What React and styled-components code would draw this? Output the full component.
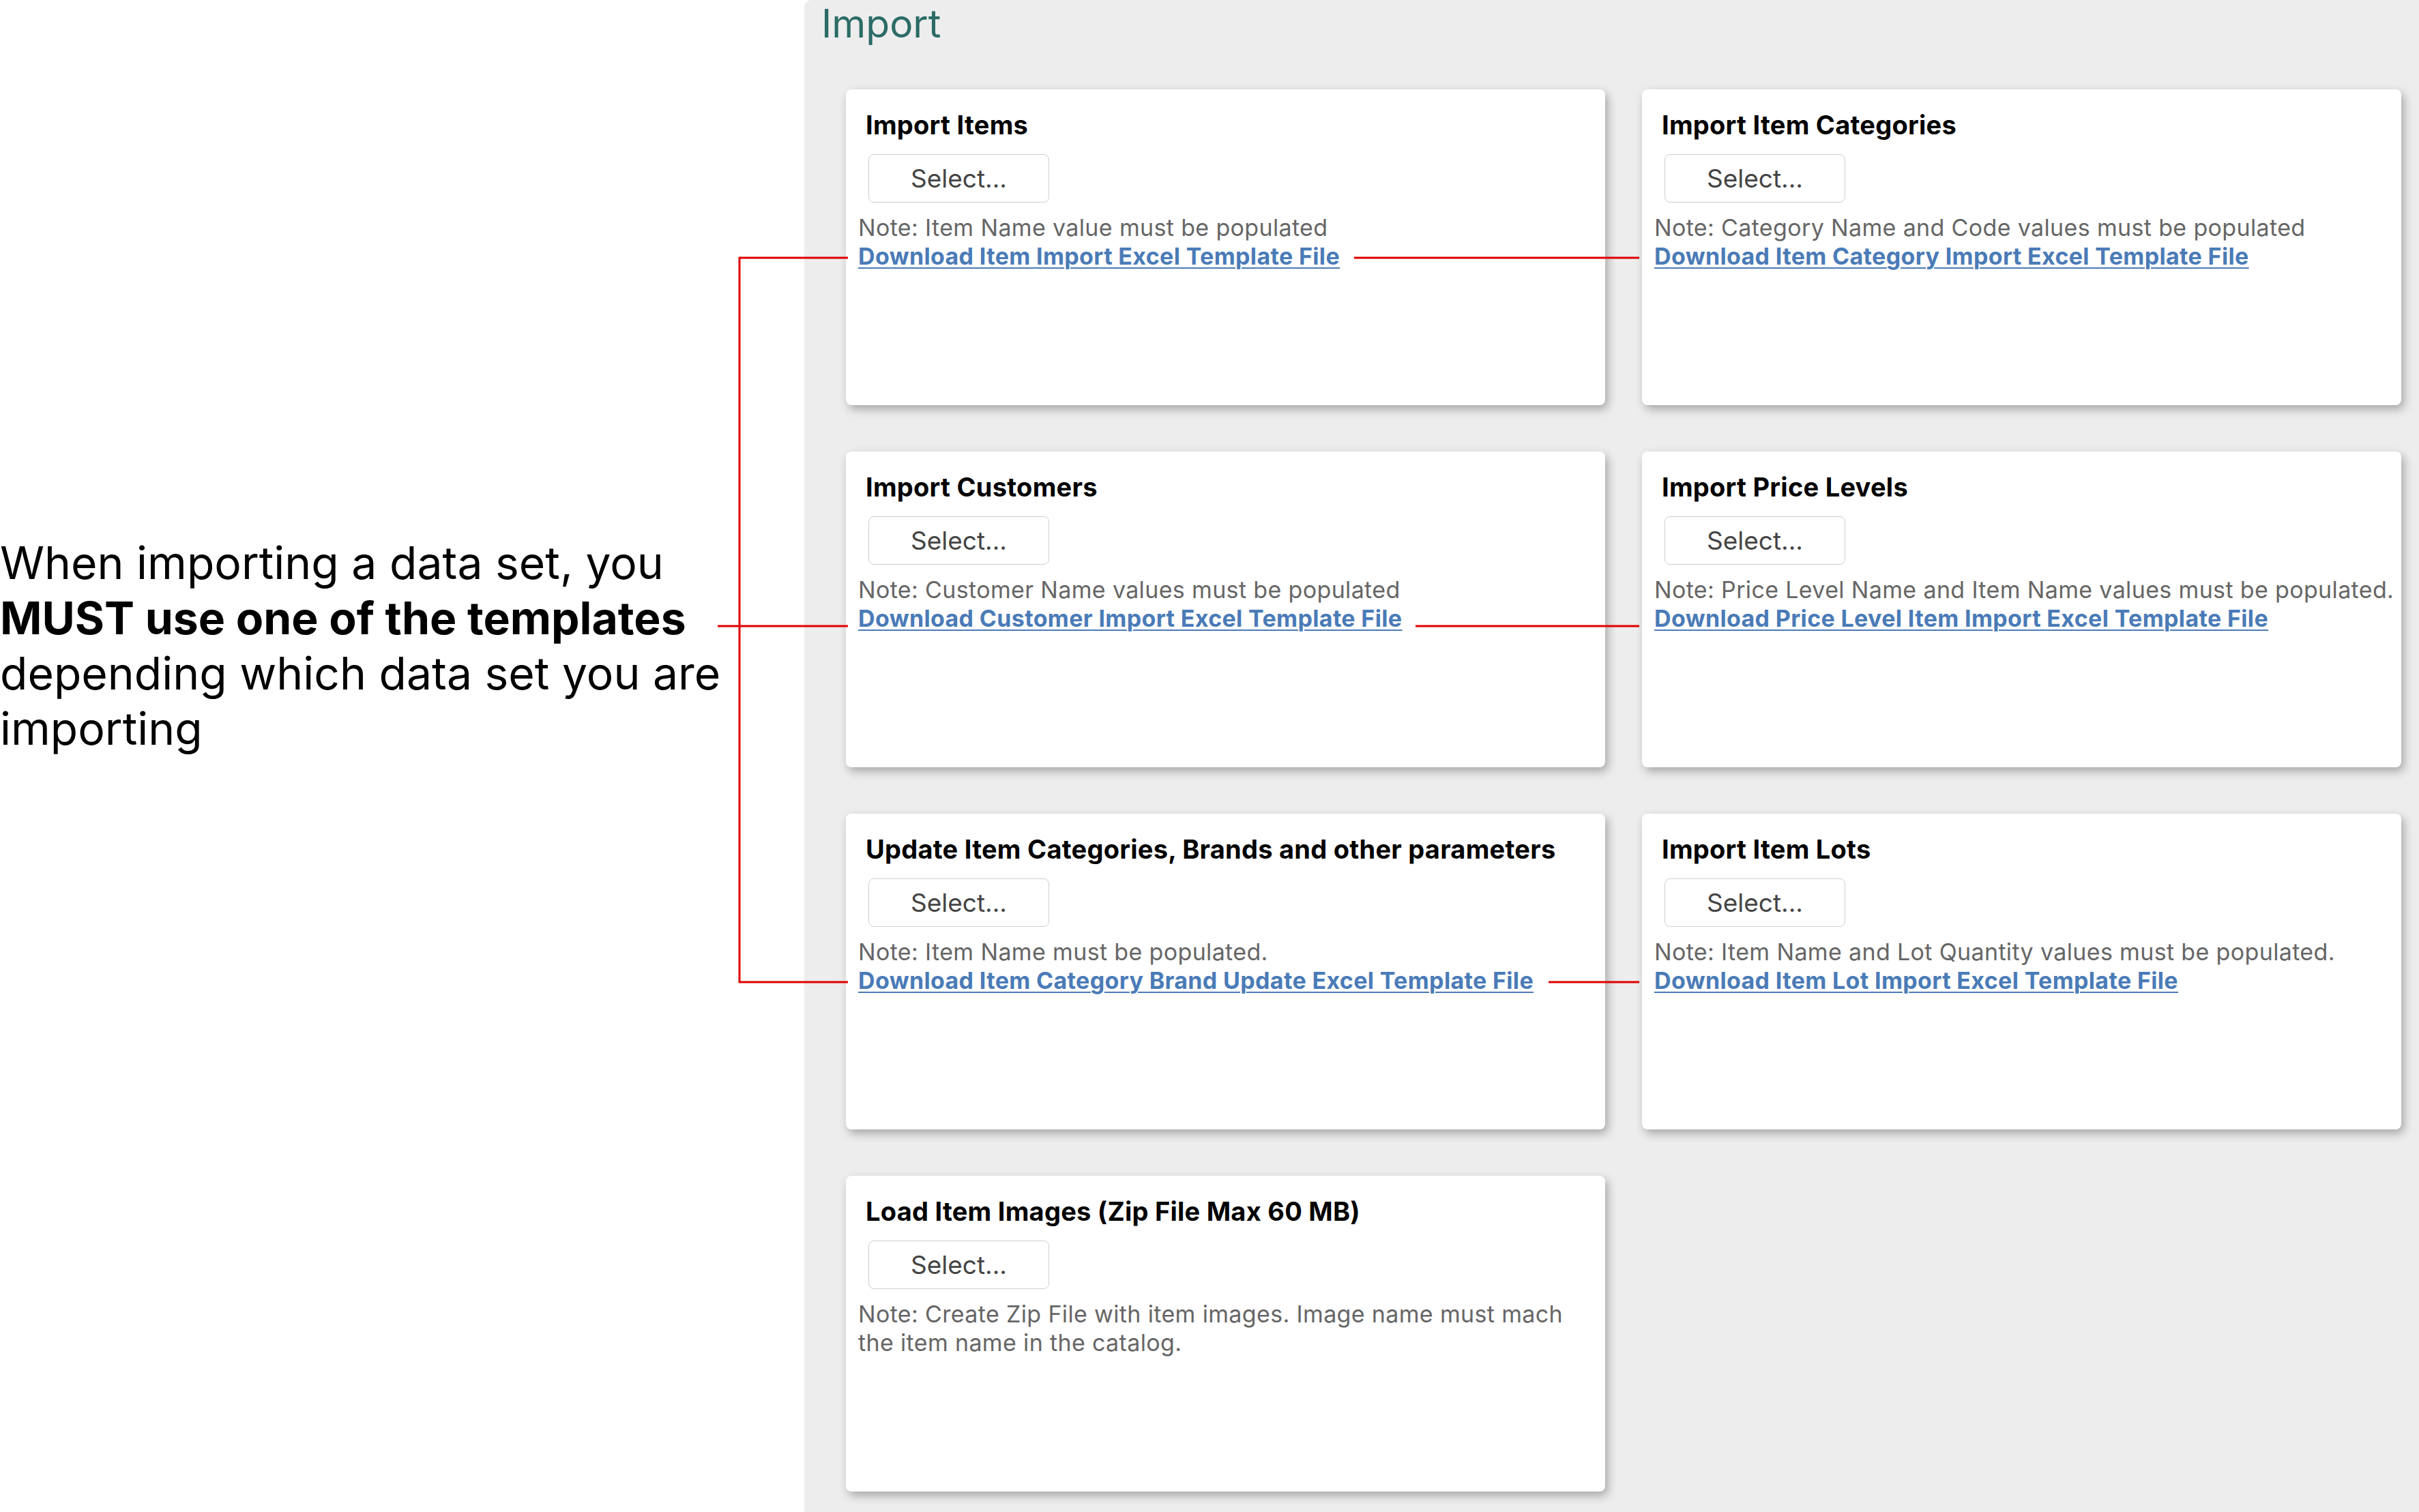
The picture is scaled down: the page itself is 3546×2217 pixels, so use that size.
import React from 'react';
import styled, { createGlobalStyle } from 'styled-components';

const GlobalStyle = createGlobalStyle`
  html, body {
    margin: 0;
    padding: 0;
    background: #fff;
  }
  body {
    font-family: Inter, "Liberation Sans", sans-serif;
  }
`;

const Page = styled.div`
  position: relative;
  display: flex;
  width: 3546px;
  height: 2217px;
  overflow: hidden;
`;

const Aside = styled.div`
  width: 1179px;
  flex-shrink: 0;
  padding-top: 785px;
  box-sizing: border-box;
`;

const Callout = styled.p`
  margin: 0;
  max-width: 1110px;
  font-size: 66px;
  line-height: 81px;
  color: #000;

  strong {
    font-weight: 700;
  }
`;

const Panel = styled.section`
  flex: 1;
  background: #ededed;
  border-top-left-radius: 10px;
  padding: 0 26px 0 25px;
`;

const Heading = styled.h1`
  margin: 0;
  font-size: 57px;
  font-weight: 400;
  line-height: 69px;
  color: #2b6b66;
`;

const Grid = styled.div`
  display: grid;
  grid-template-columns: repeat(2, 1fr);
  grid-auto-rows: 463px;
  column-gap: 54px;
  row-gap: 68px;
  margin-top: 62px;
  padding-left: 36px;
`;

const Card = styled.div`
  background: #fff;
  border-radius: 8px;
  box-shadow: 4px 6px 14px rgba(0, 0, 0, 0.3);
  padding: 30px 8px 0 18px;
  display: flex;
  flex-direction: column;
  align-items: flex-start;
`;

const CardTitle = styled.h2`
  margin: 0 0 20px 11px;
  font-size: 38px;
  font-weight: 700;
  letter-spacing: 0.25px;
  line-height: 45px;
  color: #000;
`;

const SelectButton = styled.button`
  width: 265px;
  height: 71px;
  margin: 0 0 16px 15px;
  border: 1px solid #cfcfcf;
  border-radius: 8px;
  background: #fff;
  font-family: inherit;
  font-size: 37px;
  color: #444;
  cursor: pointer;
`;

const Note = styled.p`
  margin: 0;
  white-space: pre;
  font-size: 34px;
  letter-spacing: 0.35px;
  line-height: 42px;
  color: #666;
`;

const TemplateLink = styled.a`
  display: block;
  font-size: 34px;
  letter-spacing: 0.35px;
  line-height: 42px;
  font-weight: 700;
  color: #4a7bb7;
  text-decoration: underline;
  text-decoration-thickness: 2px;
  text-underline-offset: 4px;
`;

const Overlay = styled.svg`
  position: absolute;
  top: 0;
  left: 0;
  pointer-events: none;
`;

const imports = [
  {
    title: 'Import Items',
    note: 'Note: Item Name value must be populated',
    link: 'Download Item Import Excel Template File',
  },
  {
    title: 'Import Item Categories',
    note: 'Note: Category Name and Code values must be populated',
    link: 'Download Item Category Import Excel Template File',
  },
  {
    title: 'Import Customers',
    note: 'Note: Customer Name values must be populated',
    link: 'Download Customer Import Excel Template File',
  },
  {
    title: 'Import Price Levels',
    note: 'Note: Price Level Name and Item Name values must be populated.',
    link: 'Download Price Level Item Import Excel Template File',
  },
  {
    title: 'Update Item Categories, Brands and other parameters',
    note: 'Note: Item Name must be populated.',
    link: 'Download Item Category Brand Update Excel Template File',
  },
  {
    title: 'Import Item Lots',
    note: 'Note: Item Name and Lot Quantity values must be populated.',
    link: 'Download Item Lot Import Excel Template File',
  },
  {
    title: 'Load Item Images (Zip File Max 60 MB)',
    note: 'Note: Create Zip File with item images. Image name must mach\nthe item name in the catalog.',
  },
];

// red annotation lines drawn over the page
const lines = [
  [1084, 377, 1084, 1441],
  [1083, 378, 1243, 378],
  [1052, 918, 1243, 918],
  [1083, 1440, 1243, 1440],
  [1985, 378, 2403, 378],
  [2075, 918, 2403, 918],
  [2270, 1440, 2403, 1440],
];

const ImportCard = ({ title, note, link }) => (
  <Card>
    <CardTitle>{title}</CardTitle>
    <SelectButton type="button">Select...</SelectButton>
    <Note>{note}</Note>
    {link && <TemplateLink href="#">{link}</TemplateLink>}
  </Card>
);

const App = () => {
  return (
    <>
      <GlobalStyle />
      <Page>
        <Aside>
          <Callout>
            When importing a data set, you <strong>MUST use one of the templates</strong> depending which data set you are importing
          </Callout>
        </Aside>
        <Panel>
          <Heading>Import</Heading>
          <Grid>
            {imports.map((item) => (
              <ImportCard key={item.title} {...item} />
            ))}
          </Grid>
        </Panel>
        <Overlay width="3546" height="2217">
          {lines.map(([x1, y1, x2, y2], i) => (
            <line key={i} x1={x1} y1={y1} x2={x2} y2={y2} stroke="#e00000" strokeWidth="3" />
          ))}
        </Overlay>
      </Page>
    </>
  );
};

export default App;
